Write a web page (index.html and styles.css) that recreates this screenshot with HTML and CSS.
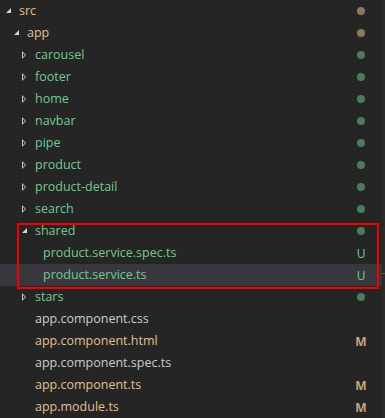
FILE: index.html
```html
<!DOCTYPE html>
<html lang="en">
<head>
  <meta charset="UTF-8">
  <title>Explorer</title>
  <link rel="stylesheet" href="styles.css">
</head>
<body>

  <div class="explorer">
    <div class="tree">

      <div class="row d0">
        <span class="twisty open"></span>
        <span class="label mod">src</span>
        <span class="deco"><i class="dot mod-dot"></i></span>
      </div>
      <div class="row d1">
        <span class="twisty open"></span>
        <span class="label mod">app</span>
        <span class="deco"><i class="dot mod-dot"></i></span>
      </div>
      <div class="row d2">
        <span class="twisty closed"></span>
        <span class="label new">carousel</span>
        <span class="deco"><i class="dot new-dot"></i></span>
      </div>
      <div class="row d2">
        <span class="twisty closed"></span>
        <span class="label new">footer</span>
        <span class="deco"><i class="dot new-dot"></i></span>
      </div>
      <div class="row d2">
        <span class="twisty closed"></span>
        <span class="label new">home</span>
        <span class="deco"><i class="dot new-dot"></i></span>
      </div>
      <div class="row d2">
        <span class="twisty closed"></span>
        <span class="label new">navbar</span>
        <span class="deco"><i class="dot new-dot"></i></span>
      </div>
      <div class="row d2">
        <span class="twisty closed"></span>
        <span class="label new">pipe</span>
        <span class="deco"><i class="dot new-dot"></i></span>
      </div>
      <div class="row d2">
        <span class="twisty closed"></span>
        <span class="label new">product</span>
        <span class="deco"><i class="dot new-dot"></i></span>
      </div>
      <div class="row d2">
        <span class="twisty closed"></span>
        <span class="label new">product-detail</span>
        <span class="deco"><i class="dot new-dot"></i></span>
      </div>
      <div class="row d2">
        <span class="twisty closed"></span>
        <span class="label new">search</span>
        <span class="deco"><i class="dot new-dot"></i></span>
      </div>

      <!-- annotated group: red box drawn on top -->
      <div class="highlight">
        <div class="row d2">
          <span class="twisty open"></span>
          <span class="label new">shared</span>
          <span class="deco"><i class="dot new-dot"></i></span>
        </div>
        <div class="row d3">
          <span class="twisty"></span>
          <span class="label new">product.service.spec.ts</span>
          <span class="deco letter new">U</span>
        </div>
        <div class="row d3 selected">
          <span class="twisty"></span>
          <span class="label new">product.service.ts</span>
          <span class="deco letter new">U</span>
        </div>
      </div>

      <div class="row d2">
        <span class="twisty closed"></span>
        <span class="label new">stars</span>
        <span class="deco"><i class="dot new-dot"></i></span>
      </div>
      <div class="row d2">
        <span class="twisty"></span>
        <span class="label">app.component.css</span>
        <span class="deco"></span>
      </div>
      <div class="row d2">
        <span class="twisty"></span>
        <span class="label mod">app.component.html</span>
        <span class="deco letter mod">M</span>
      </div>
      <div class="row d2">
        <span class="twisty"></span>
        <span class="label">app.component.spec.ts</span>
        <span class="deco"></span>
      </div>
      <div class="row d2">
        <span class="twisty"></span>
        <span class="label mod">app.component.ts</span>
        <span class="deco letter mod">M</span>
      </div>
      <div class="row d2">
        <span class="twisty"></span>
        <span class="label mod">app.module.ts</span>
        <span class="deco letter mod">M</span>
      </div>

    </div>
    <div class="scroll"><i class="mark"></i></div>
  </div>

</body>
</html>
```

FILE: styles.css
```css
body {
  margin: 0;
  background: #252526;
  font-family: 'Open Sans', 'Noto Sans', sans-serif;
  font-size: 12.5px;
  color: #cccccc;
  overflow: hidden;
}

.explorer {
  display: flex;
  height: 418px;
}

.tree {
  flex: 1;
}

.scroll {
  width: 3px;
  background: #2a2a2b;
  position: relative;
}

.scroll .mark {
  position: absolute;
  left: 0;
  top: 273px;
  width: 3px;
  height: 1px;
  background: #5a5a5a;
}

.row {
  display: flex;
  align-items: center;
  height: 22px;
  padding-right: 10px;
}

.d0 { padding-left: 4px; }
.d1 { padding-left: 12px; }
.d2 { padding-left: 20px; }
.d3 { padding-left: 28px; }

.selected {
  background: #37373d;
}

.twisty {
  width: 15px;
  height: 22px;
  flex-shrink: 0;
  position: relative;
}

.twisty.open::before {
  content: "";
  position: absolute;
  left: 2px;
  top: 8px;
  border-style: solid;
  border-width: 0 0 5px 5px;
  border-color: transparent transparent #d4d4d4 transparent;
}

.twisty.closed::before {
  content: "";
  position: absolute;
  left: 2px;
  top: 7px;
  border-style: solid;
  border-width: 4px 0 4px 4px;
  border-color: transparent transparent transparent #c8c8c8;
}

.twisty.closed::after {
  content: "";
  position: absolute;
  left: 3px;
  top: 9px;
  border-style: solid;
  border-width: 2px 0 2px 2px;
  border-color: transparent transparent transparent #252526;
}

.label {
  flex: 1;
  white-space: nowrap;
  line-height: 22px;
}

.label.new { color: #73c991; }
.label.mod { color: #e2c08d; }

.deco {
  width: 16px;
  margin-right: 3px;
  display: flex;
  justify-content: center;
  align-items: center;
}

.dot {
  width: 8px;
  height: 8px;
  border-radius: 50%;
  display: block;
}

.mod-dot { background: #8b7a5e; }
.new-dot { background: #4b7d5c; }

.letter {
  font-size: 12px;
  font-weight: bold;
}

.letter.new { color: #73c991; font-weight: normal; }
.letter.mod { color: #c2a77c; }

.highlight {
  position: relative;
}

.highlight::after {
  content: "";
  position: absolute;
  left: 17px;
  top: 3px;
  bottom: -3px;
  width: 358px;
  border: 2px solid #f00000;
  pointer-events: none;
}
```
